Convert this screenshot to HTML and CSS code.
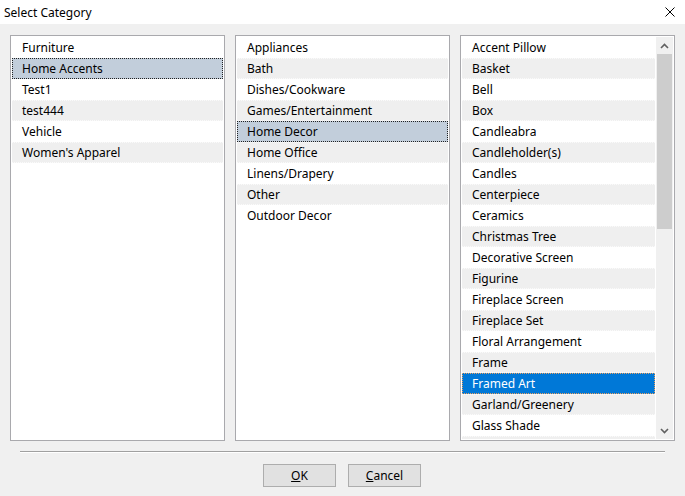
FILE: index.html
```html
<!DOCTYPE html>
<html lang="en">
<head>
  <meta charset="UTF-8" />
  <title>Select Category</title>
  <link rel="stylesheet" href="styles.css">
</head>
<body>
  <div class="titlebar">
    <span class="title">Select Category</span>
    <svg class="close" width="10" height="10" viewBox="0 0 10 10">
      <path d="M0.5 0.5 L9.5 9.5 M9.5 0.5 L0.5 9.5" stroke="#000" stroke-width="1" fill="none" />
    </svg>
  </div>

  <div class="content">
    <div class="lists">
      <div class="listbox">
        <div class="rows">
          <div class="row">Furniture</div>
          <div class="row focus">Home Accents</div>
          <div class="row">Test1</div>
          <div class="row">test444</div>
          <div class="row">Vehicle</div>
          <div class="row">Women's Apparel</div>
        </div>
      </div>

      <div class="listbox">
        <div class="rows">
          <div class="row">Appliances</div>
          <div class="row">Bath</div>
          <div class="row">Dishes/Cookware</div>
          <div class="row">Games/Entertainment</div>
          <div class="row focus">Home Decor</div>
          <div class="row">Home Office</div>
          <div class="row">Linens/Drapery</div>
          <div class="row">Other</div>
          <div class="row">Outdoor Decor</div>
        </div>
      </div>

      <div class="listbox scrolled">
        <div class="rows">
          <div class="row">Accent Pillow</div>
          <div class="row">Basket</div>
          <div class="row">Bell</div>
          <div class="row">Box</div>
          <div class="row">Candleabra</div>
          <div class="row">Candleholder(s)</div>
          <div class="row">Candles</div>
          <div class="row">Centerpiece</div>
          <div class="row">Ceramics</div>
          <div class="row">Christmas Tree</div>
          <div class="row">Decorative Screen</div>
          <div class="row">Figurine</div>
          <div class="row">Fireplace Screen</div>
          <div class="row">Fireplace Set</div>
          <div class="row">Floral Arrangement</div>
          <div class="row">Frame</div>
          <div class="row selected">Framed Art</div>
          <div class="row">Garland/Greenery</div>
          <div class="row">Glass Shade</div>
          <div class="row"></div>
        </div>
        <div class="scrollbar">
          <div class="arrow">
            <svg width="9" height="6" viewBox="0 0 9 6">
              <path d="M1 5 L4.5 1.5 L8 5" stroke="#606060" stroke-width="1.6" fill="none" />
            </svg>
          </div>
          <div class="track">
            <div class="thumb"></div>
          </div>
          <div class="arrow">
            <svg width="9" height="6" viewBox="0 0 9 6">
              <path d="M1 1 L4.5 4.5 L8 1" stroke="#606060" stroke-width="1.6" fill="none" />
            </svg>
          </div>
        </div>
      </div>
    </div>

    <div class="separator"></div>

    <div class="buttons">
      <button class="btn"><u>O</u>K</button>
      <button class="btn"><u>C</u>ancel</button>
    </div>
  </div>
</body>
</html>
```

FILE: styles.css
```css
body {
  margin: 0;
  background: #f0f0f0;
  font-family: "Noto Sans", "Open Sans", sans-serif;
  font-size: 12px;
  color: #000;
  width: 685px;
  height: 496px;
  overflow: hidden;
}

.titlebar {
  height: 24px;
  background: #fff;
  display: flex;
  align-items: center;
  justify-content: space-between;
  padding: 0 10px 0 4px;
}

.title {
  font-size: 12px;
}

.content {
  padding: 11px 10px 0 10px;
}

.lists {
  display: flex;
  gap: 10px;
}

.listbox {
  width: 215px;
  height: 406px;
  box-sizing: border-box;
  border: 1px solid #a9a9ad;
  background: #fff;
  padding: 1px;
  display: flex;
  overflow: hidden;
}

.rows {
  flex: 1;
  overflow: hidden;
}

.row {
  height: 21px;
  line-height: 20px;
  padding: 1px 0 0 10px;
  box-sizing: border-box;
  white-space: nowrap;
}

.row:nth-child(even) {
  background: #efefef;
  border-top: 1px dotted #fafafa;
  border-bottom: 1px dotted #fafafa;
  padding-top: 0;
  line-height: 19px;
}

.row.focus {
  background: #c2cedb;
  border: 1px dotted #222;
  padding: 1px 0 0 9px;
  line-height: 17px;
}

.row.selected {
  background: #0078d7;
  color: #fff;
  border: 1px dotted #e8a060;
  padding: 1px 0 0 9px;
  line-height: 17px;
}

.scrolled {
  padding-right: 1px;
}

.scrollbar {
  width: 17px;
  background: #f0f0f0;
  display: flex;
  flex-direction: column;
  margin-left: 1px;
}

.arrow {
  height: 17px;
  display: flex;
  align-items: center;
  justify-content: center;
}

.track {
  flex: 1;
  padding: 0 1px;
}

.thumb {
  height: 175px;
  background: #cdcdcd;
}

.separator {
  margin: 10px 10px 0 10px;
  height: 1px;
  background: #a0a0a0;
  border-bottom: 1px solid #fff;
}

.buttons {
  display: flex;
  justify-content: center;
  gap: 12px;
  margin-top: 11px;
  padding-right: 1px;
}

.btn {
  width: 73px;
  height: 23px;
  background: #e1e1e1;
  border: 1px solid #adadad;
  font-family: "Noto Sans", "Open Sans", sans-serif;
  font-size: 12px;
  color: #000;
  padding: 0;
}
```
